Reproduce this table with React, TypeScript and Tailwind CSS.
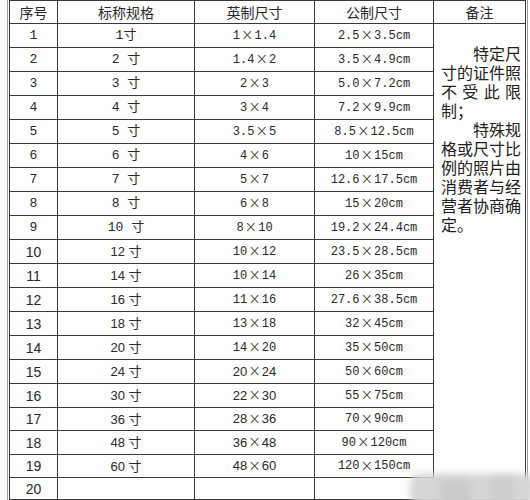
import React from "react";

type Row = [string, string, string, string];

const rows: Row[] = [
  ["1", "1寸", "1×1.4", "2.5×3.5cm"],
  ["2", "2 寸", "1.4×2", "3.5×4.9cm"],
  ["3", "3 寸", "2×3", "5.0×7.2cm"],
  ["4", "4 寸", "3×4", "7.2×9.9cm"],
  ["5", "5 寸", "3.5×5", "8.5×12.5cm"],
  ["6", "6 寸", "4×6", "10×15cm"],
  ["7", "7 寸", "5×7", "12.6×17.5cm"],
  ["8", "8 寸", "6×8", "15×20cm"],
  ["9", "10 寸", "8×10", "19.2×24.4cm"],
  ["10", "12 寸", "10×12", "23.5×28.5cm"],
  ["11", "14 寸", "10×14", "26×35cm"],
  ["12", "16 寸", "11×16", "27.6×38.5cm"],
  ["13", "18 寸", "13×18", "32×45cm"],
  ["14", "20 寸", "14×20", "35×50cm"],
  ["15", "24 寸", "20×24", "50×60cm"],
  ["16", "30 寸", "22×30", "55×75cm"],
  ["17", "36 寸", "28×36", "70×90cm"],
  ["18", "48 寸", "36×48", "90×120cm"],
  ["19", "60 寸", "48×60", "120×150cm"],
  ["20", "", "", ""],
];

const heights = [
  "h-[24px]", "h-[24px]", "h-[24px]", "h-[24px]", "h-[24px]",
  "h-[24px]", "h-[24px]", "h-[24px]", "h-[24px]", "h-[24px]",
  "h-[24px]", "h-[24px]", "h-[24px]", "h-[24px]", "h-[24px]",
  "h-[24px]", "h-[23px]", "h-[24px]", "h-[23px]", "h-[22px]",
];

const CJK = "font-['Noto_Sans_CJK_SC',sans-serif]";
const MONO = "font-['Liberation_Mono','Noto_Sans_CJK_SC',monospace]";
const SANS = "font-['Liberation_Sans','Noto_Sans_CJK_SC',sans-serif]";

function Val({ text, mono }: { text: string; mono: boolean }) {
  if (!text) return null;
  const parts = text.split("×");
  const cls = mono ? MONO + " text-[12px]" : SANS + " text-[13px]";
  if (parts.length === 1) {
    return (
      <span className={"whitespace-pre leading-none " + (mono ? MONO : SANS) + " text-[13px]"}>
        {text}
      </span>
    );
  }
  return (
    <span className="whitespace-pre inline-flex items-center">
      <span className={cls}>{parts[0]}</span>
      <span className={"font-['DejaVu_Sans',sans-serif] text-[15px] font-light leading-none mx-[1px]"}>×</span>
      <span className={cls}>{parts[1]}</span>
    </span>
  );
}

export default function App() {
  return (
    <div className="w-[530px] h-[500px] bg-[#fdfdfd] relative overflow-hidden text-[#2a2a2a]">
      <div className="ml-[7px] w-[521px] border-x border-[#9a9a9a] px-[1px]">
        <div className="border-l border-r border-t border-[#3a3a3a]">
          {/* header */}
          <div className={"flex h-[23px] border-b border-[#3a3a3a] text-[14px] " + CJK}>
            <div className="w-[48px] border-r border-[#3a3a3a] flex items-center justify-center">序号</div>
            <div className="w-[137px] border-r border-[#3a3a3a] flex items-center justify-center">标称规格</div>
            <div className="w-[120px] border-r border-[#3a3a3a] flex items-center justify-center">英制尺寸</div>
            <div className="w-[119px] border-r border-[#3a3a3a] flex items-center justify-center">公制尺寸</div>
            <div className="flex-1 flex items-center justify-center">备注</div>
          </div>
          {/* body */}
          <div className="flex">
            <div className="flex flex-col">
              {rows.map((r, i) => {
                const early = i < 9;
                return (
                  <div key={i} className={"flex border-b border-[#3a3a3a] " + heights[i]}>
                    <div className="w-[48px] border-r border-[#3a3a3a] flex items-center justify-center pt-[1px]">
                      <span className={early ? MONO + " text-[13px]" : SANS + " text-[14px]"}>{r[0]}</span>
                    </div>
                    <div className="w-[137px] border-r border-[#3a3a3a] flex items-center justify-center">
                      <Val text={r[1]} mono={early} />
                    </div>
                    <div className="w-[120px] border-r border-[#3a3a3a] flex items-center justify-center">
                      <Val text={r[2]} mono={i < 14} />
                    </div>
                    <div className="w-[119px] border-r border-[#3a3a3a] flex items-center justify-center">
                      <Val text={r[3]} mono={true} />
                    </div>
                  </div>
                );
              })}
            </div>
            <div className="flex-1 border-b border-[#3a3a3a] pl-[7px] pt-[20px]">
              <div className={"w-[80px] text-[16px] leading-[19px] text-justify indent-[2em] text-[#222] " + CJK}>
                <p>特定尺寸的证件照不受此限制；</p>
                <p>特殊规格或尺寸比例的照片由消费者与经营者协商确定。</p>
              </div>
            </div>
          </div>
        </div>
      </div>
      {/* watermark blur */}
      <div className="absolute left-[410px] top-[474px] w-[125px] h-[30px] rounded-[10px] bg-[#d6d6d6] blur-[3px]" />
      <div className="absolute left-[440px] top-[480px] w-[30px] h-[24px] bg-[#c9c9c9] blur-[4px]" />
      <div className="absolute left-[490px] top-[478px] w-[24px] h-[24px] bg-[#cdcdcd] blur-[4px]" />
    </div>
  );
}
